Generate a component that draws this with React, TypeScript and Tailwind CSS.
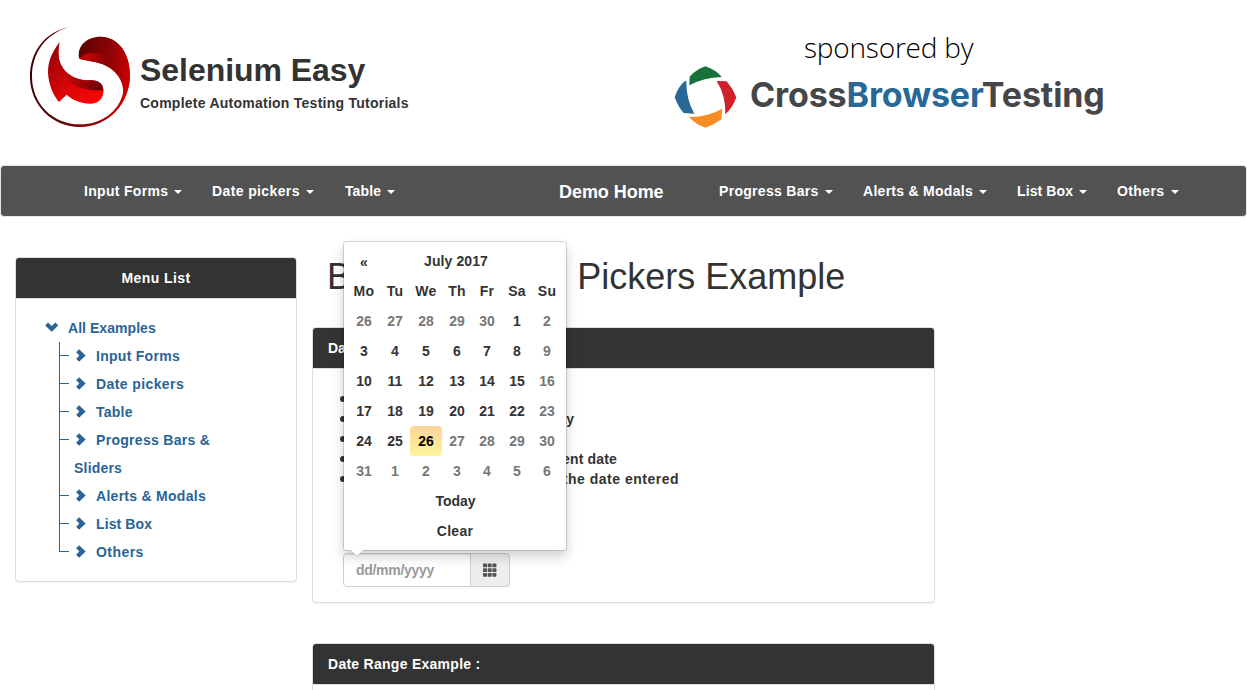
import React from "react";

const leftNav = [
  { label: "Input Forms", w: "w-[98px]", t: "tracking-[0.31px]" },
  { label: "Date pickers", w: "w-[102px]", t: "tracking-[0.38px]" },
  { label: "Table", w: "w-[50px] ml-px", t: "tracking-[0.1px]" },
];

const rightNav = [
  { label: "Progress Bars", w: "w-[114px]", t: "tracking-[0.3px]" },
  { label: "Alerts & Modals", w: "w-[124px]", t: "tracking-[0.28px]" },
  { label: "List Box", w: "w-[70px]", t: "tracking-[0.1px]" },
  { label: "Others", w: "w-[62px]", t: "tracking-[0.4px]" },
];

const weeks = [
  [26, 27, 28, 29, 30, 1, 2],
  [3, 4, 5, 6, 7, 8, 9],
  [10, 11, 12, 13, 14, 15, 16],
  [17, 18, 19, 20, 21, 22, 23],
  [24, 25, 26, 27, 28, 29, 30],
  [31, 1, 2, 3, 4, 5, 6],
];

const notes = [
  { text: "Sundays disabled", w: "w-[180px]" },
  { text: "Week starts from Monday", w: "w-[234px]" },
  { text: "Future dates disabled", w: "w-[180px]" },
  { text: "Click on Today for current date", w: "w-[277px] tracking-[0.15px]" },
  { text: "Click on Clear to clear the date entered", w: "w-[339px] tracking-[0.5px]" },
];

function isMuted(week: number, day: number) {
  if (day === 6) return true;
  if (week === 0) return day < 5;
  if (week === 4) return day > 2;
  return week === 5;
}

function SeleniumLogo() {
  return (
    <svg width="120" height="115" viewBox="0 0 360 345" className="block">
      <defs>
        <linearGradient id="ring" x1="0" y1="0" x2="1" y2="0">
          <stop offset="0" stopColor="#3a0202" />
          <stop offset="0.5" stopColor="#7a0305" />
          <stop offset="1" stopColor="#d20000" />
        </linearGradient>
        <linearGradient id="topDark" x1="0" y1="0.2" x2="1" y2="0.5">
          <stop offset="0" stopColor="#5c0205" />
          <stop offset="0.6" stopColor="#920306" />
          <stop offset="1" stopColor="#c80000" />
        </linearGradient>
        <linearGradient id="topFold" x1="0" y1="0" x2="1" y2="0.3">
          <stop offset="0" stopColor="#d80404" />
          <stop offset="0.6" stopColor="#8d0204" />
          <stop offset="1" stopColor="#a80204" />
        </linearGradient>
        <linearGradient id="leafDark" x1="0" y1="0" x2="1" y2="0.8">
          <stop offset="0" stopColor="#a30507" />
          <stop offset="0.5" stopColor="#c40508" />
          <stop offset="1" stopColor="#740205" />
        </linearGradient>
        <linearGradient id="leafLight" x1="0" y1="0" x2="1" y2="1">
          <stop offset="0" stopColor="#8c0306" />
          <stop offset="0.55" stopColor="#dc0508" />
          <stop offset="1" stopColor="#ff0505" />
        </linearGradient>
      </defs>
      <path
        fill="url(#ring)"
        d="M145 22C72 38 30 98 30 170C30 254 97 321 180 321C264 321 330 253 330 166C330 98 292 50 240 50L250 128C286 146 309 170 311 206C305 268 250 313 180 313C97 313 36 250 36 170C36 98 78 42 145 22Z"
      />
      <path
        fill="url(#topDark)"
        d="M177 113C171 78 200 50 241 50C294 50 330 98 330 166C330 190 322 218 308 238C316 196 300 160 258 137C232 123 202 123 179 117Z"
      />
      <path
        fill="url(#topFold)"
        d="M180 116C196 92 240 94 272 116C300 136 312 162 311 190C303 166 287 149 258 137C232 124 202 124 180 116Z"
      />
      <path
        fill="url(#leafLight)"
        d="M119 66C94 100 84 124 84 158C86 198 102 228 117 246L140 224C158 240 184 251 210 251C238 251 251 234 250 210C250 192 236 182 215 181C176 182 148 170 130 146C113 122 113 94 119 66Z"
      />
      <path
        fill="url(#leafDark)"
        d="M119 66C112 88 104 116 120 153C140 191 186 214 238 211Q246 211 250 214C252 192 236 182 215 181C176 182 148 170 130 146C113 122 113 94 119 66Z"
      />
    </svg>
  );
}

function HexLogo() {
  return (
    <svg width="64" height="64" viewBox="41 135 192 192" className="block">
      <path fill="#17713b" d="M87 196L88 170Q108 148 135 139Q166 149 184 171Q132 172 87 196Z" />
      <path fill="#286896" d="M75 182Q54 198 43 232Q54 262 70 279L102 281Q77 238 78 184Z" />
      <path fill="#d2202b" d="M169 183L199 184Q218 206 228 232Q218 262 195 283Q197 228 169 183Z" />
      <path fill="#f68c23" d="M86 291Q140 292 186 266L183 298Q160 315 136 323Q108 315 86 291Z" />
    </svg>
  );
}

function NavItem({ label, w, t }: { label: string; w: string; t: string }) {
  return (
    <a className={`flex shrink-0 items-center justify-between whitespace-nowrap ${w} ${t}`}>
      {label}
      <span className="mt-px h-0 w-0 border-x-4 border-t-4 border-x-transparent border-t-white" />
    </a>
  );
}

function ChevronRight() {
  return (
    <svg width="10" height="13" viewBox="0 0 10 13" className="block shrink-0" fill="#2a6496">
      <path d="M3.1 0.2L9.6 6.5L3.1 12.8L0.1 9.8L3.4 6.5L0.1 3.2Z" />
    </svg>
  );
}

function TreeRow({ label, t, last }: { label: string; t: string; last?: boolean }) {
  return (
    <li className="flex h-7">
      <span className={`w-px bg-[#2a6496] ${last ? "h-[14px]" : "h-7"}`} />
      <div className="flex h-7 items-center pb-[2px]">
        <span className="h-px w-[9px] bg-[#2a6496]" />
        <span className="ml-[7px] mr-[10px] pt-px">
          <ChevronRight />
        </span>
        <span className={`pt-px ${t}`}>{label}</span>
      </div>
    </li>
  );
}

function Calendar() {
  return (
    <div className="absolute bottom-[36px] left-0 z-10 h-[310px] w-[224px] rounded border border-black/15 bg-white bg-clip-padding p-1 shadow-[0_6px_12px_rgba(0,0,0,0.175)]">
      <div className="grid grid-cols-[32px_30px_32px_30px_30px_30px_30px] auto-rows-[30px] text-center leading-[30px]">
        <span className="pt-px">«</span>
        <span className="col-span-5 tracking-[0.1px]">July 2017</span>
        <span />
        {["Mo", "Tu", "We", "Th", "Fr", "Sa", "Su"].map((d) => (
          <span key={d} className="tracking-[0.3px]">
            {d}
          </span>
        ))}
        {weeks.map((week, w) =>
          week.map((n, d) => (
            <span
              key={`${w}-${d}`}
              className={
                w === 4 && d === 2
                  ? "rounded bg-linear-to-b from-[#fdd49a] to-[#fdf59a] text-black"
                  : isMuted(w, d)
                    ? "text-[#777]"
                    : ""
              }
            >
              {n}
            </span>
          )),
        )}
        <span className="col-span-7 pl-px">Today</span>
        <span className="col-span-7 tracking-[0.3px]">Clear</span>
      </div>
      <svg width="16" height="8" viewBox="0 0 16 8" className="absolute -bottom-[7px] left-[5px]">
        <path d="M1 0L8 7L15 0" fill="#fff" />
        <path d="M1 1L8 7.5L15 1" fill="none" stroke="#ccc" strokeWidth="0.8" />
      </svg>
    </div>
  );
}

function Heading({ children, className = "" }: { children: React.ReactNode; className?: string }) {
  return (
    <div
      className={`h-[41px] rounded-t-[3px] border-b border-[#ddd] bg-[#333] px-[15px] leading-[40px] text-white ${className}`}
    >
      {children}
    </div>
  );
}

const panel = "rounded border border-[#ddd] bg-white shadow-[0_1px_1px_rgba(0,0,0,0.05)]";

export default function App() {
  return (
    <div className="h-[690px] w-[1247px] overflow-hidden bg-white font-['Liberation_Sans',Arial,sans-serif] text-[14px] font-bold leading-5 text-[#333]">
      <header className="flex h-[165px] pl-5 pt-5">
        <SeleniumLogo />
        <div className="w-[534px] pt-[31px]">
          <h1 className="text-[32px] leading-[38px] tracking-[-0.05px]">Selenium Easy</h1>
          <p className="pt-1 text-[14px] tracking-[0.25px]">Complete Automation Testing Tutorials</p>
        </div>
        <div className="flex w-[440px] flex-col">
          <p className="pl-[130px] pt-[7px] font-['Open_Sans',sans-serif] text-[28px] font-light leading-[40px] tracking-[-0.2px] text-black">
            sponsored by
          </p>
          <div className="-mt-[2px] flex items-center">
            <HexLogo />
            <span className="pb-1 pl-[12px] font-['Inter',sans-serif] text-[34px] font-bold leading-[44px] tracking-[-0.11px] text-[#454648]">
              Cross<span className="text-[#286896]">Browser</span>Testing
            </span>
          </div>
        </div>
      </header>

      <nav className="flex h-[52px] items-center rounded border border-[#e7e7e7] bg-[#525252] pl-[83px] text-white">
        <div className="flex w-[475px] gap-[30px]">
          {leftNav.map((n) => (
            <NavItem key={n.label} {...n} />
          ))}
        </div>
        <a className="w-[160px] pt-px text-[18px] tracking-[-0.05px]">Demo Home</a>
        <div className="flex gap-[30px]">
          {rightNav.map((n) => (
            <NavItem key={n.label} {...n} />
          ))}
        </div>
      </nav>

      <div className="flex pl-[15px] pt-10">
        <aside className={`mr-[15px] h-[325px] w-[282px] shrink-0 ${panel}`}>
          <Heading className="text-center tracking-[0.4px]">Menu List</Heading>
          <div className="pl-[29px] pt-[15px] leading-7 text-[#2a6496]">
            <div className="flex h-7 items-center pb-[2px]">
              <svg width="14" height="10" viewBox="0 0 14 10" className="mr-[9px]" fill="#2a6496">
                <path d="M0.2 3.4L3 0.6L6.7 4L10.4 0.6L13.2 3.4L6.7 9.8Z" />
              </svg>
              <span className="pt-px tracking-[0.05px]">All Examples</span>
            </div>
            <ul className="ml-[14px]">
              <TreeRow label="Input Forms" t="tracking-[0.28px]" />
              <TreeRow label="Date pickers" t="tracking-[0.4px]" />
              <TreeRow label="Table" t="tracking-[0.25px]" />
              <TreeRow label="Progress Bars &" t="tracking-[0.3px]" />
              <li className="flex h-7">
                <span className="mr-[14px] h-7 w-px bg-[#2a6496]" />
                <span className="tracking-[0.2px]">Sliders</span>
              </li>
              <TreeRow label="Alerts & Modals" t="tracking-[0.28px]" />
              <TreeRow label="List Box" t="tracking-[0.1px]" />
              <TreeRow label="Others" t="tracking-[0.45px]" last />
            </ul>
          </div>
        </aside>

        <main className="w-[623px] shrink-0">
          <h2 className="h-[70px] whitespace-nowrap pl-[15px] text-[36px] font-normal leading-[40px]">
            Bootstrap Date Pickers Example
          </h2>
          <section className={`h-[276px] ${panel}`}>
            <Heading>Date Example :</Heading>
            <div className="pl-[27px] pt-5">
              <ul className="h-[164px]">
                {notes.map((n) => (
                  <li key={n.text} className={`flex h-5 items-center justify-between ${n.w}`}>
                    <span className="h-[6px] w-[6px] rounded-full bg-[#333]" />
                    {n.text}
                  </li>
                ))}
              </ul>
              <div className="relative ml-[3px] flex h-[34px] w-[167px]">
                <input
                  className="h-[34px] w-[128px] rounded-l border border-[#ccc] px-3 text-[14px] font-bold tracking-[-0.3px] shadow-[inset_0_1px_1px_rgba(0,0,0,0.075)] placeholder:text-[#999]"
                  placeholder="dd/mm/yyyy"
                />
                <span className="flex w-[39px] items-center justify-center rounded-r border border-l-0 border-[#ccc] bg-[#eee]">
                  <svg width="14" height="14" viewBox="0 0 14 14" fill="#555">
                    {[0.5, 5.2, 9.9].map((y) =>
                      [0, 4.7, 9.4].map((x) => (
                        <rect key={`${x}-${y}`} x={x} y={y} width="4" height="3.8" rx="0.6" />
                      )),
                    )}
                  </svg>
                </span>
                <Calendar />
              </div>
            </div>
          </section>
          <section className={`mt-10 h-[200px] ${panel}`}>
            <Heading className="tracking-[0.27px]">Date Range Example :</Heading>
          </section>
        </main>
      </div>
    </div>
  );
}
